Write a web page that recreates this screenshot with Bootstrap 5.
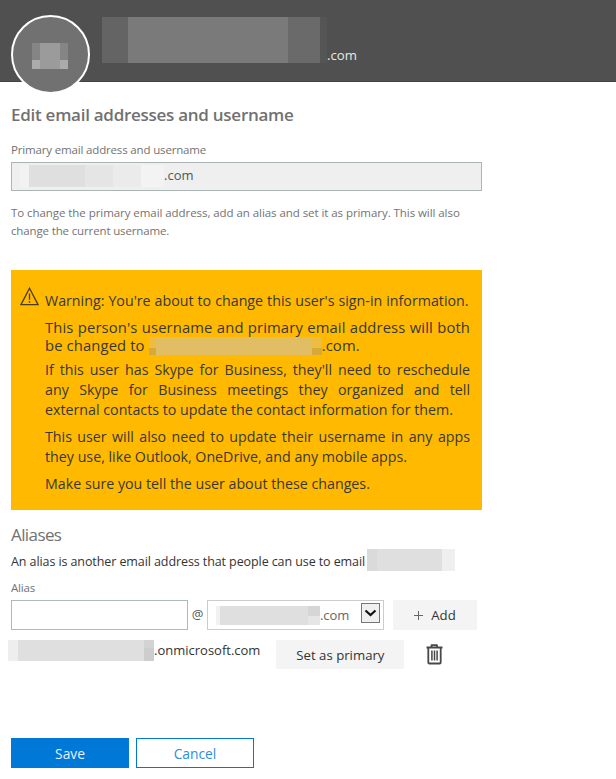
<!DOCTYPE html>
<html lang="en">
<head>
<meta charset="utf-8">
<meta name="viewport" content="width=device-width, initial-scale=1">
<title>Edit email addresses and username</title>
<link href="https://cdn.jsdelivr.net/npm/bootstrap@5.3.0/dist/css/bootstrap.min.css" rel="stylesheet">
<style>
body{font-family:"Open Sans","Noto Sans",sans-serif;font-size:13px;color:#333;background:#fff;overflow:hidden}
.btn,.form-control{font-family:inherit;border-radius:0}
.ln{display:block;white-space:nowrap}
.topbar{height:82px;background:#505050;border-bottom:1px solid #444;padding-left:10.5px}
.avatar{width:79px;height:79px;margin-top:15px;border:2px solid #fff;background:#717171}
.avatar svg{margin-top:2px}
.avatar svg,.mask{display:block;flex:none}
.name-mask{margin:17px 0 0 12.5px}
.domain{color:#e8e8e8;margin-top:45px;line-height:20px;font-size:13.2px}
.panel{width:482px;padding-left:11px}
.heading{font-size:17px;font-weight:600;color:#717171;line-height:24px;margin:21px 0 14px;letter-spacing:-.27px}
.label-sm{font-size:11.5px;color:#737373;line-height:18px;letter-spacing:-.16px}
.primary-box{height:29px;margin-top:3px;border:1px solid #aab5b6;background:#efefef;color:#555}
.primary-box .ln{line-height:24px}
.primary-box .mask{margin-top:2px}
.hint{font-size:11.5px;color:#737373;line-height:18px;margin-top:13px;letter-spacing:-.06px}
.hint .last{letter-spacing:-.14px}
.warn{height:240px;margin-top:30px;background:#ffb900;color:#383838;font-size:14.24px;padding:17px 12px 0 9px}
.warn-copy{width:425px;margin-left:6px;line-height:20px;padding-top:4px}
.lead-line{word-spacing:.3px}
.just{text-align:justify;text-align-last:justify}
.lg-copy{font-size:14.8px;letter-spacing:.12px;line-height:18px;margin-top:7px}
.lg-copy .mask{margin-top:1px;height:18px;margin-bottom:-1px}
.para{margin-top:7px}
.lg-copy + .para{margin-top:6px}
.sub{font-size:17px;color:#717171;line-height:24px;margin:13px 0 3px;letter-spacing:-.6px}
.about{height:24px;font-size:12.5px;letter-spacing:-.09px;line-height:24px}
.about .mask{margin:-1px 0 0 2px}
.alias-label{margin:5px 0 3px}
.alias-row{height:30px}
.alias-in{width:177px;height:30px;padding:0 6px;border:1px solid #aeb9b9}
.at{width:19px;text-align:center;line-height:28px;color:#555}
.domain-sel{width:177px;height:30px;border:1px solid #ccc;color:#666;padding:0 3px 0 8px}
.domain-sel .mask{margin-top:5px}
.domain-sel .ln{line-height:28px;letter-spacing:-.1px}
.arrow{width:19px;height:20px;border:1px solid #777;background:#f0f0f0;margin-top:2px}
.flat{background:#f4f4f4;color:#333;font-size:13.2px;line-height:30px;height:30px;padding:0;border:0}
.add{width:84px;margin-left:9px}
.row-two{margin:10px 0 0 -3px;height:30px}
.row-two .ln{line-height:20px}
.setp{width:128px;height:29px;margin-left:16px}
.trash{margin:4px 0 0 22px}
.actions{margin-top:68px;gap:7px}
.act{width:118px;height:30px;font-size:13.8px;padding:0;border:1px solid #0078d7;line-height:30px}
.save{background:#0078d7;color:#e3f1fc}
.cancel{background:#fff;color:#2a8fdd}
</style>
<script src="https://cdn.jsdelivr.net/npm/bootstrap@5.3.0/dist/js/bootstrap.bundle.min.js"></script>
</head>
<body>
<header class="topbar d-flex align-items-start">
  <div class="avatar rounded-circle d-flex align-items-center justify-content-center flex-shrink-0">
    <svg width="36" height="26"><path fill="#858585" d="M0 0h36v26H0z"/><path fill="#9b9b9b" d="M8 0h20v26H8z"/><path fill="#ababab" d="M0 17h8v9H0zM28 17h8v9h-8z"/></svg>
  </div>
  <svg class="mask name-mask" width="225" height="46"><path fill="#646464" d="M0 0h26v46H0z"/><path fill="#7a7a7a" d="M26 0h160v46H26z"/><path fill="#6a6a6a" d="M186 0h32v46h-32z"/><path fill="#555" d="M218 0h7v46h-7z"/></svg>
  <span class="domain">.com</span>
</header>
<main class="panel">
  <h1 class="heading ln">Edit email addresses and username</h1>
  <div class="label-sm ln">Primary email address and username</div>
  <div class="primary-box d-flex align-items-start">
    <svg class="mask" width="152" height="22"><path fill="#f2f2f2" d="M8 0h9v22H8z"/><path fill="#dfdfdf" d="M17 0h56v22H17z"/><path fill="#e5e5e5" d="M73 0h28v22H73z"/><path fill="#ebebeb" d="M101 0h28v22h-28z"/><path fill="#f3f3f3" d="M129 0h23v22h-23z"/></svg>
    <span class="ln">.com</span>
  </div>
  <div class="hint">
    <span class="ln">To change the primary email address, add an alias and set it as primary. This will also</span>
    <span class="ln last">change the current username.</span>
  </div>
  <section class="warn d-flex align-items-start" role="alert">
    <svg class="flex-shrink-0" width="19" height="19" fill="none" stroke="#4b3d16" stroke-width="1.3"><path d="M9.5 1.3 1 17.6h17z"/><path d="M9.5 6.5v6.2M9.5 14v1.7"/></svg>
    <div class="warn-copy">
      <span class="ln lead-line">Warning: You're about to change this user's sign-in information.</span>
      <div class="lg-copy">
        <span class="ln just">This person's username and primary email address will both</span>
        <span class="d-flex"><span class="ln">be changed to</span><svg class="mask ms-1" width="173" height="18"><path fill="#e1bd63" d="M0 0h173v18H0z"/><path fill="#edbc43" d="M0 0h7v11H0zM163 0h10v11h-10z"/><path fill="#d6a938" d="M0 11h7v7H0zM163 11h10v7h-10z"/></svg><span class="ln">.com.</span></span>
      </div>
      <div class="para">
        <span class="ln just">If this user has Skype for Business, they'll need to reschedule</span>
        <span class="ln just">any Skype for Business meetings they organized and tell</span>
        <span class="ln">external contacts to update the contact information for them.</span>
      </div>
      <div class="para">
        <span class="ln just">This user will also need to update their username in any apps</span>
        <span class="ln">they use, like Outlook, OneDrive, and any mobile apps.</span>
      </div>
      <div class="para ln">Make sure you tell the user about these changes.</div>
    </div>
  </section>
  <h2 class="sub">Aliases</h2>
  <div class="d-flex align-items-start about">
    <span class="ln">An alias is another email address that people can use to email</span>
    <svg class="mask" width="88" height="22"><path fill="#dadada" d="M0 0h10v22H0z"/><path fill="#dfdfdf" d="M10 0h65v22H10z"/><path fill="#efefef" d="M75 0h13v22H75z"/></svg>
  </div>
  <div class="label-sm alias-label">Alias</div>
  <div class="d-flex alias-row">
    <input class="form-control alias-in flex-shrink-0" aria-label="Alias">
    <span class="at flex-shrink-0">@</span>
    <div class="domain-sel d-flex align-items-start flex-shrink-0">
      <svg class="mask" width="104" height="19"><path fill="#f2f2f2" d="M0 0h4v19H0z"/><path fill="#dfdfdf" d="M4 0h88v19H4z"/><path fill="#d6d6d6" d="M92 0h12v10H92z"/><path fill="#e6e6e6" d="M92 10h12v9H92z"/></svg>
      <span class="ln">.com</span>
      <span class="arrow ms-auto"><svg class="d-block" width="17" height="18" fill="none" stroke="#111" stroke-width="2.2"><path d="m3.500 6.500 5 4.500 5-4.500"/></svg></span>
    </div>
    <button class="btn flat add d-flex align-items-center justify-content-center flex-shrink-0"><svg class="me-2" width="9" height="9" stroke="#666"><path d="M0 4.5h9M4.5 0v9"/></svg>Add</button>
  </div>
  <div class="d-flex align-items-start row-two">
    <svg class="mask" width="146" height="21"><path fill="#eee" d="M0 0h10v21H0z"/><path fill="#dfdfdf" d="M10 0h126v21H10z"/><path fill="#d2d4d4" d="M136 0h10v8h-10z"/><path fill="#cdcdcd" d="M136 8h10v13h-10z"/></svg>
    <span class="ln">.onmicrosoft.com</span>
    <button class="btn flat setp flex-shrink-0">Set as primary</button>
    <svg class="trash flex-shrink-0" width="17" height="21" fill="none" stroke="#484848" stroke-width="1.8" stroke-linejoin="round"><path d="M.500 3.500h16M5.500 3.500V1.200h5.500v2.300M2.300 4v14.500q0 1 1 1h10.400q1 0 1-1V4"/><path stroke-width="1.500" d="M5.900 6.500v10M8.500 6.500v10M11.100 6.500v10"/></svg>
  </div>
  <div class="d-flex actions">
    <button class="btn act save">Save</button><button class="btn act cancel">Cancel</button>
  </div>
</main>
</body>
</html>
